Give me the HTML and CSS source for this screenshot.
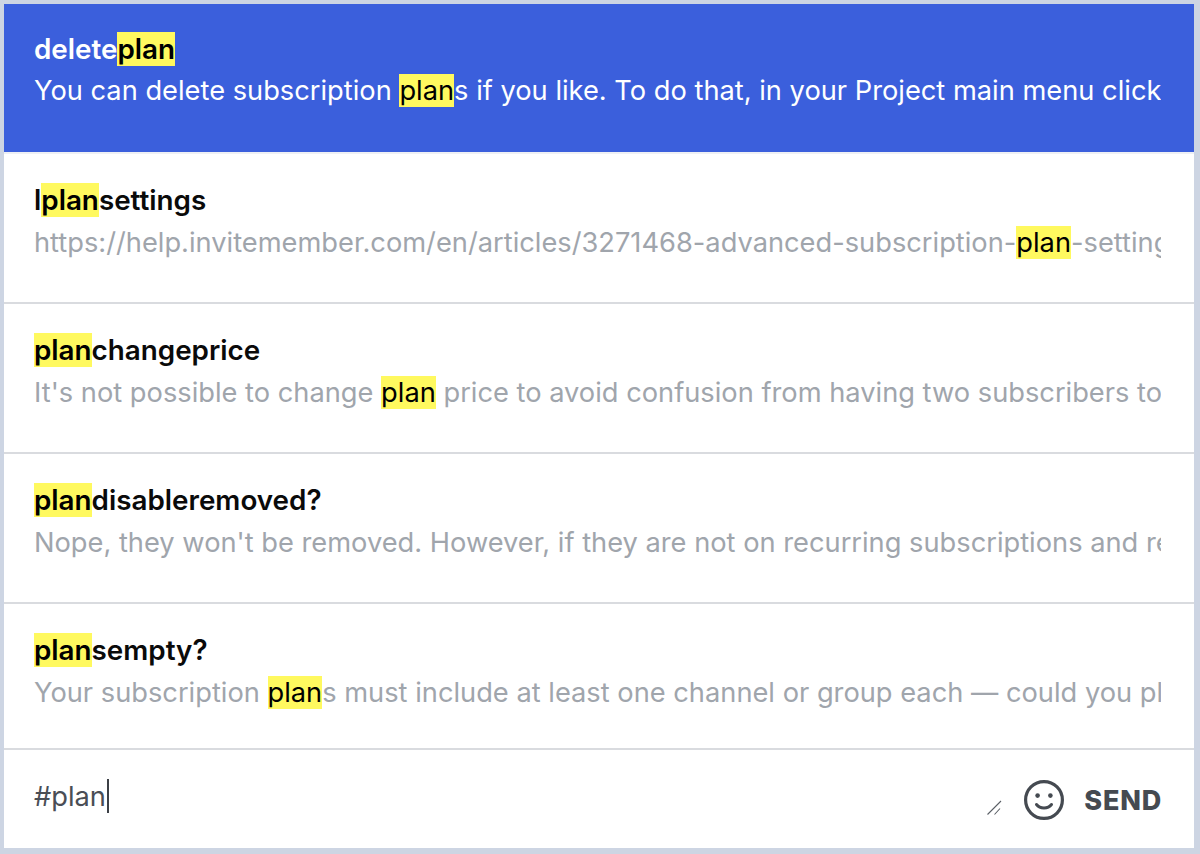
FILE: index.html
```html
<!DOCTYPE html>
<html lang="en">
<head>
<meta charset="utf-8">
<title>Snippets</title>
<link rel="stylesheet" href="styles.css">
</head>
<body>
<div class="panel">
  <ul class="list">
    <li class="item active">
      <div class="title">delete<mark>plan</mark></div>
      <div class="desc">You can delete subscription <mark>plan</mark>s if you like. To do that, in your Project main menu click on the plan you want to delete</div>
    </li>
    <li class="item">
      <div class="title">l<mark>plan</mark>settings</div>
      <div class="desc">https://help.invitemember.com/en/articles/3271468-advanced-subscription-<mark>plan</mark>-settings-and-more</div>
    </li>
    <li class="item">
      <div class="title"><mark>plan</mark>changeprice</div>
      <div class="desc">It's not possible to change <mark>plan</mark> price to avoid confusion from having two subscribers to the same plan</div>
    </li>
    <li class="item">
      <div class="title"><mark>plan</mark>disableremoved?</div>
      <div class="desc">Nope, they won't be removed. However, if they are not on recurring subscriptions and renew manually</div>
    </li>
    <li class="item last">
      <div class="title"><mark>plan</mark>sempty?</div>
      <div class="desc">Your subscription <mark>plan</mark>s must include at least one channel or group each — could you please add one</div>
    </li>
  </ul>
  <div class="composer">
    <div class="input">#plan<span class="caret"></span></div>
    <svg class="grip" width="18" height="18" viewBox="0 0 18 18" aria-hidden="true">
      <path d="M1.5 15.5 15 2M8.5 15.5 14 9.5" fill="none" stroke="#5a5f66" stroke-width="1.1"/>
    </svg>
    <svg class="smile" width="40" height="40" viewBox="0 0 40 40" aria-hidden="true">
      <circle cx="20" cy="20" r="18.4" fill="none" stroke="#454a51" stroke-width="3.2"/>
      <circle cx="13.6" cy="15.6" r="2.3" fill="#454a51"/>
      <circle cx="26.4" cy="15.6" r="2.3" fill="#454a51"/>
      <path d="M12.5 24.5c3.5 4.6 11.5 4.6 15 0" fill="none" stroke="#454a51" stroke-width="3" stroke-linecap="round"/>
    </svg>
    <span class="send">SEND</span>
  </div>
</div>
</body>
</html>
```
FILE: styles.css
```css
* { box-sizing: border-box; }
html, body { margin: 0; padding: 0; }
body {
  width: 1200px;
  height: 854px;
  padding: 4px 6px 6px 4px;
  background: #cdd5e3;
  font-family: Inter, "Liberation Sans", sans-serif;
  overflow: hidden;
}
.panel {
  height: 844px;
  background: #fff;
  display: flex;
  flex-direction: column;
}
.list { list-style: none; margin: 0; padding: 0; }
.item {
  height: 150px;
  padding: 28px 33px 0 30px;
  border-bottom: 2px solid #d9dbdf;
  color: #a0a5ac;
}
.item.last { height: 146px; }
.item.active {
  padding-top: 27px;
  background: #3b5fdc;
  color: #fff;
  border-bottom-color: #eef0f4;
}
.title {
  font-size: 27.8px;
  font-weight: 600;
  line-height: 36px;
  color: #0a0a0a;
  white-space: nowrap;
}
.active .title { color: #fff; }
.desc {
  margin-top: 7px;
  font-size: 27.25px;
  line-height: 36px;
  white-space: nowrap;
  overflow: hidden;
}
.active .desc { margin-top: 6px; }
mark { background: #fff95f; color: #000; }
.composer {
  flex: 1;
  display: flex;
  align-items: center;
  padding: 2px 32px 0 30px;
}
.input {
  flex: 1;
  font-size: 27.25px;
  line-height: 36px;
  color: #4a4e55;
  display: flex;
  align-items: center;
  margin-top: -6px;
}
.caret {
  width: 2px;
  height: 34px;
  margin: -2px 0 0 1px;
  background: #3c4046;
}
.grip { margin: 16px 20px 0 0; }
.smile { margin-right: 20px; }
.send {
  font-size: 27px;
  font-weight: 800;
  color: #454a51;
  letter-spacing: 0.8px;
}
```
